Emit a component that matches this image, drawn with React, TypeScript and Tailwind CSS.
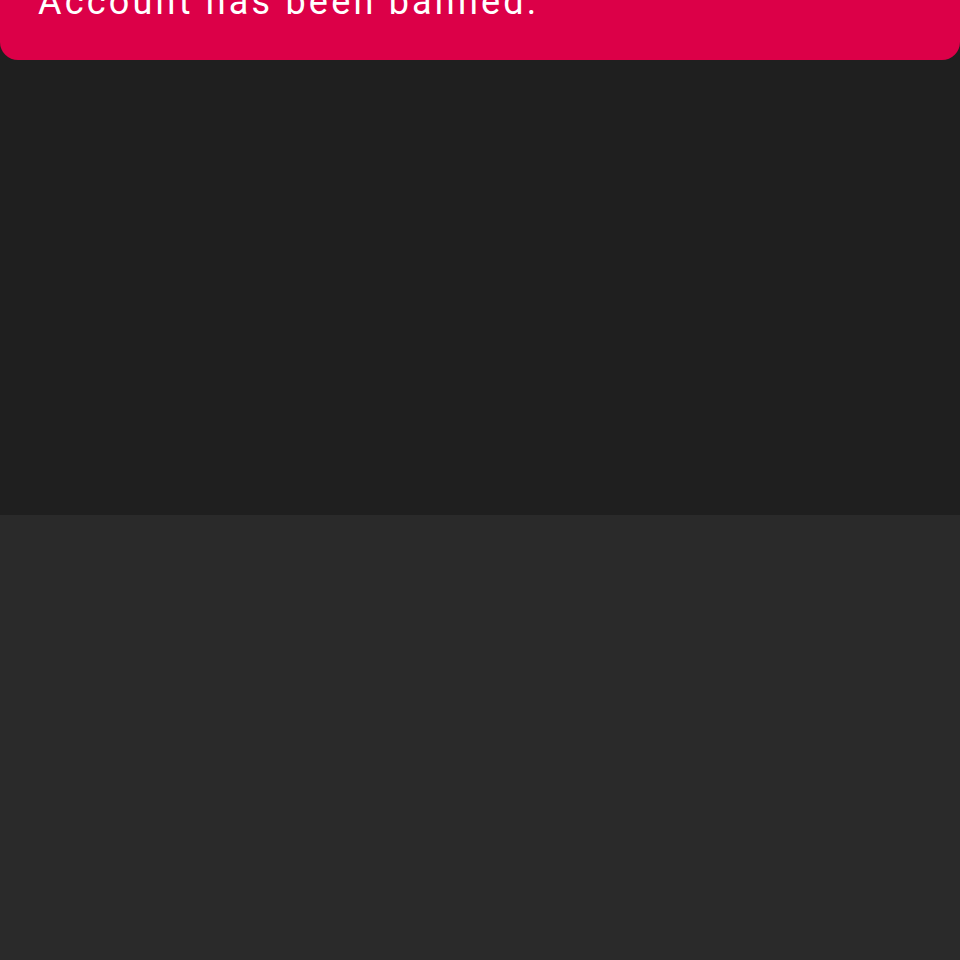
export default function App() {
  return (
    <div className="w-[960px] h-[960px] flex flex-col bg-[#2a2a2a]" style={{ fontFamily: "Roboto, 'Noto Sans', sans-serif" }}>
      <div className="h-[515px] bg-[#1f1f1f] flex flex-col">
        <div className="h-[60px] bg-[#dc0048] rounded-b-[18px] overflow-hidden">
          <p className="-mt-[16px] pl-[38px] text-[36px] leading-[36px] tracking-[3.2px] text-white whitespace-nowrap">
            Account has been banned.
          </p>
        </div>
      </div>
      <div className="flex-1 bg-[#2a2a2a]" />
    </div>
  );
}
